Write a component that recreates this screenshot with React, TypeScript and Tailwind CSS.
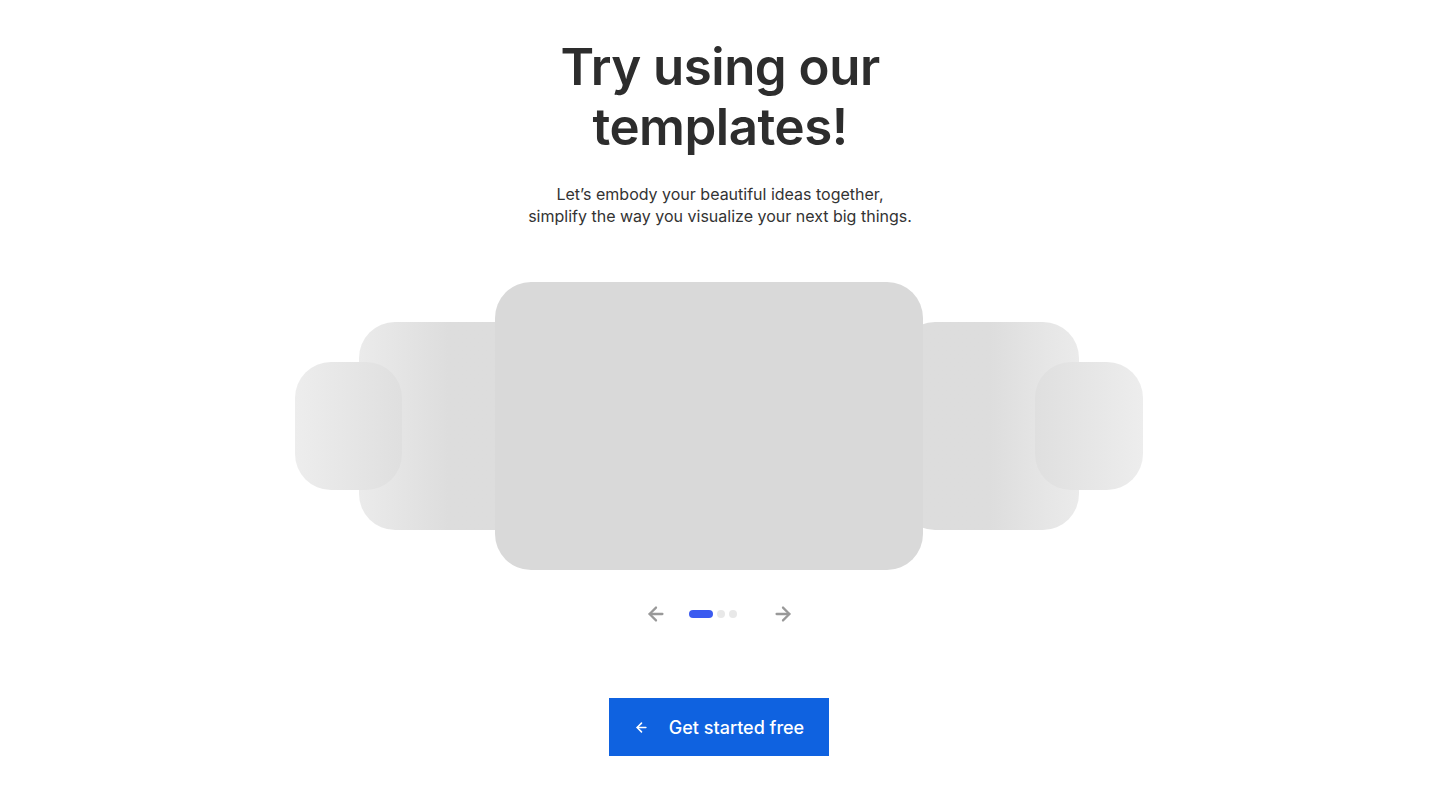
import React from "react";

function ArrowLeft({ className }: { className?: string }) {
  return (
    <svg viewBox="0 0 24 24" className={className} fill="none" stroke="currentColor" strokeWidth={2.5} strokeLinecap="round" strokeLinejoin="round">
      <path d="M19 12H5" />
      <path d="M12 19l-7-7 7-7" />
    </svg>
  );
}
function ArrowRight({ className }: { className?: string }) {
  return (
    <svg viewBox="0 0 24 24" className={className} fill="none" stroke="currentColor" strokeWidth={2.5} strokeLinecap="round" strokeLinejoin="round">
      <path d="M5 12h14" />
      <path d="M12 5l7 7-7 7" />
    </svg>
  );
}

export default function App() {
  return (
    <div className="min-h-[789px] w-full bg-white flex flex-col items-center" style={{ fontFamily: "Inter, 'Noto Sans', sans-serif" }}>
      <h1 className="mt-[37px] text-center text-[51px] leading-[60px] font-semibold text-[#2d2d2d] tracking-[-0.5px]">
        Try using our
        <br />
        templates!
      </h1>
      <p className="mt-[26px] text-center text-[16px] leading-[22px] text-[#333333]">
        Let’s embody your beautiful ideas together,
        <br />
        simplify the way you visualize your next big things.
      </p>

      <div className="mt-[55px] mr-[2px] flex items-center">
        <div className="relative z-20 w-[107px] h-[128px] rounded-[36px] bg-gradient-to-r from-[#ededed] to-[#dfdfdf]" />
        <div className="relative z-10 ml-[-43px] w-[180px] h-[208px] rounded-[36px] bg-gradient-to-r from-[#ebebeb] via-[#dddddd] to-[#dddddd]" />
        <div className="relative z-30 ml-[-44px] w-[428px] h-[288px] rounded-[36px] bg-[#d9d9d9]" />
        <div className="relative z-10 ml-[-24px] w-[180px] h-[208px] rounded-[36px] bg-gradient-to-l from-[#ebebeb] via-[#dddddd] to-[#dddddd]" />
        <div className="relative z-20 ml-[-44px] w-[108px] h-[128px] rounded-[36px] bg-gradient-to-l from-[#ededed] to-[#dfdfdf]" />
      </div>

      <div className="mt-[33px] mr-[2px] flex items-center">
        <ArrowLeft className="w-[22px] h-[22px] text-[#999999]" />
        <div className="ml-[22px] flex items-center gap-[4px]">
          <span className="block w-[24px] h-[8px] rounded-full bg-[#3b5bf0]" />
          <span className="block w-[8px] h-[8px] rounded-full bg-[#e8e8e8]" />
          <span className="block w-[8px] h-[8px] rounded-full bg-[#e8e8e8]" />
        </div>
        <ArrowRight className="ml-[35px] w-[22px] h-[22px] text-[#999999]" />
      </div>

      <button className="mt-[73px] mr-[2px] w-[220px] h-[58px] bg-[#0f62e0] text-white flex items-center justify-center gap-[20px] text-[18px] font-medium">
        <ArrowLeft className="w-[15px] h-[15px]" />
        <span>Get started free</span>
      </button>
    </div>
  );
}
